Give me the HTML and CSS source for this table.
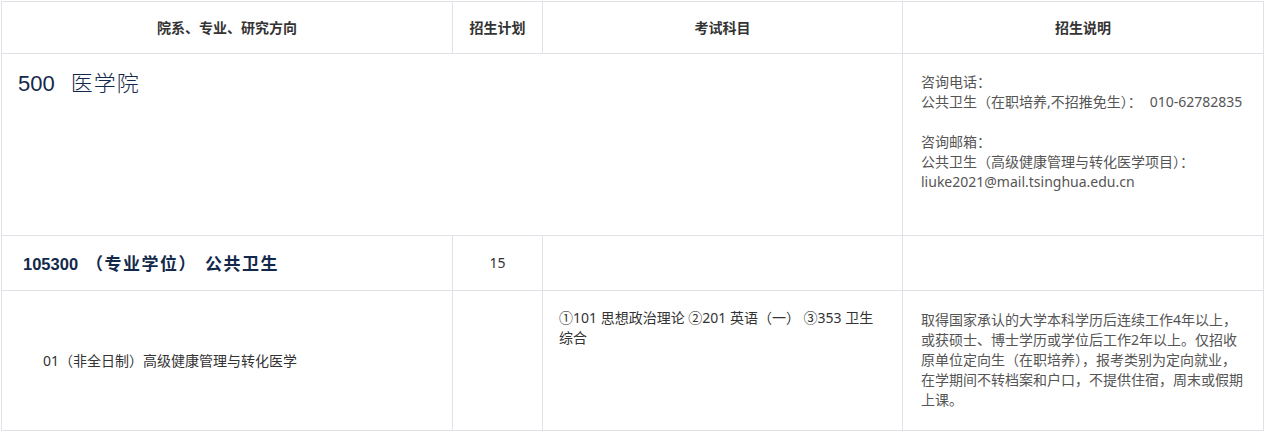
FILE: index.html
```html
<!DOCTYPE html>
<html lang="zh-CN">
<head>
<meta charset="utf-8">
<title>招生专业目录</title>
<link rel="stylesheet" href="styles.css">
</head>
<body>
<table class="catalog">
  <colgroup>
    <col class="c-major">
    <col class="c-plan">
    <col class="c-exam">
    <col class="c-note">
  </colgroup>
  <thead>
    <tr class="head-row">
      <th>院系、专业、研究方向</th>
      <th>招生计划</th>
      <th>考试科目</th>
      <th>招生说明</th>
    </tr>
  </thead>
  <tbody>
    <tr class="dept-row">
      <td class="dept-name" colspan="3"><span class="code">500</span><span class="cn">医学院</span></td>
      <td class="note note-contact">
        <div>咨询电话：</div>
        <div>公共卫生（在职培养,不招推免生）：<span class="phone">010-62782835</span></div>
        <div class="blank">&nbsp;</div>
        <div>咨询邮箱：</div>
        <div>公共卫生（高级健康管理与转化医学项目）：</div>
        <div>liuke2021@mail.tsinghua.edu.cn</div>
      </td>
    </tr>
    <tr class="major-row">
      <td class="major-name"><span class="code">105300</span><span class="cn">（专业学位）</span><span class="cn cn-name">公共卫生</span></td>
      <td class="plan">15</td>
      <td></td>
      <td></td>
    </tr>
    <tr class="dir-row">
      <td class="dir-name">01（非全日制）高级健康管理与转化医学</td>
      <td></td>
      <td class="exam">①101 思想政治理论 ②201 英语（一） ③353 卫生综合</td>
      <td class="note note-desc">取得国家承认的大学本科学历后连续工作4年以上，或获硕士、博士学历或学位后工作2年以上。仅招收原单位定向生（在职培养），报考类别为定向就业，在学期间不转档案和户口，不提供住宿，周末或假期上课。</td>
    </tr>
  </tbody>
</table>
</body>
</html>
```

FILE: styles.css
```css
html, body {
  margin: 0;
  padding: 0;
  background: #ffffff;
}

body {
  font-family: "Noto Sans", "Noto Sans CJK SC", sans-serif;
  font-size: 14px;
  line-height: 20px;
  color: #333333;
}

.catalog {
  margin: 1px 0 0 1px;
  width: 1263px;
  table-layout: fixed;
  border-collapse: collapse;
}

.c-major { width: 451px; }
.c-plan { width: 90px; }
.c-exam { width: 360px; }
.c-note { width: 361px; }

.catalog th,
.catalog td {
  box-sizing: border-box;
  border: 1px solid #dfe3e8;
  padding: 0;
  vertical-align: middle;
}

.head-row th {
  height: 52px;
  font-weight: 700;
  font-size: 14px;
  color: #333333;
  text-align: center;
}

.dept-row td {
  height: 182px;
  vertical-align: top;
}

.dept-name {
  padding: 12px 16px 0 16px !important;
  font-size: 22px;
  line-height: 30px;
  color: #13294b;
}

.dept-name .code {
  font-family: "Liberation Sans", "Noto Sans CJK SC", sans-serif;
  margin-right: 16px;
}

.dept-name .cn {
  font-family: "Noto Sans CJK SC", sans-serif;
  font-weight: 300;
  letter-spacing: 1px;
}

.note {
  color: #555555;
  padding: 0 16px 0 18px !important;
}

.note-contact {
  padding-top: 18px !important;
  white-space: nowrap;
}

.phone {
  margin-left: 8px;
}

.major-row td {
  height: 55px;
}

.major-name {
  padding-left: 21px !important;
  font-size: 17px;
  font-weight: 700;
  color: #13294b;
}

.major-name .code {
  font-family: "Liberation Sans", "Noto Sans CJK SC", sans-serif;
  font-size: 16.5px;
  margin-right: 8px;
}

.major-name .cn {
  font-family: "Noto Sans CJK SC", sans-serif;
  letter-spacing: 1.5px;
}

.major-name .cn-name {
  margin-left: 8px;
}

.plan {
  text-align: center;
  color: #333333;
}

.dir-row td {
  height: 140px;
}

.dir-name {
  padding-left: 41px !important;
  color: #333333;
}

.exam {
  vertical-align: top !important;
  padding: 17px 16px 0 16px !important;
  color: #333333;
}

.note-desc {
  vertical-align: top !important;
  padding-top: 19px !important;
  padding-bottom: 19px !important;
}
```
